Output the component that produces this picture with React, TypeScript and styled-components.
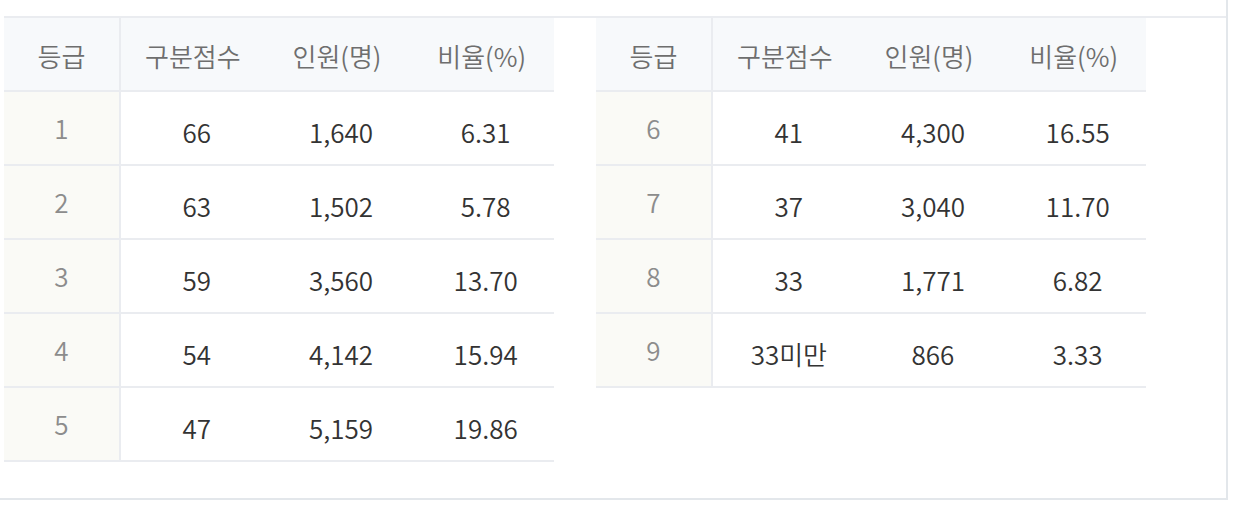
import React from "react";
import styled, { createGlobalStyle } from "styled-components";

const Global = createGlobalStyle`
  html, body { margin: 0; padding: 0; background: #fff; }
  body { font-family: "Noto Sans CJK KR", "Noto Sans", sans-serif; }
`;

const Frame = styled.div`
  box-sizing: border-box;
  width: 1228px;
  height: 500px;
  border-right: 2px solid #e3e7eb;
  border-bottom: 2px solid #e3e7eb;
  padding: 16px 0 0 4px;
`;

const Section = styled.div`
  border-top: 2px solid #eaecf0;
  display: flex;
  gap: 42px;
  align-items: flex-start;
`;

const Table = styled.table`
  width: 550px;
  border-collapse: collapse;
  table-layout: fixed;
  font-size: 26px;
  font-weight: 350;
`;

const HeadCell = styled.th<{ $first?: boolean }>`
  box-sizing: content-box;
  height: 70px;
  padding: 2px 0 0 0;
  background: #f7f9fb;
  color: #6e6e6e;
  font-size: 26px;
  font-weight: 350;
  text-align: center;
  border-bottom: 2px solid #eaecf0;
  border-right: ${(p) => (p.$first ? "2px solid #eaecf0" : "none")};
  width: ${(p) => (p.$first ? "115px" : "auto")};
`;

const GradeCell = styled.td`
  box-sizing: content-box;
  height: 70px;
  padding: 0 0 2px 0;
  background: #fafaf6;
  color: #8c8c8c;
  text-align: center;
  border-bottom: 2px solid #eaecf0;
  border-right: 2px solid #eaecf0;
`;

const Cell = styled.td`
  box-sizing: content-box;
  height: 66px;
  padding: 6px 0 0 8px;
  color: #333;
  text-align: center;
  border-bottom: 2px solid #eaecf0;
`;

type Row = [string, string, string, string];

const left: Row[] = [
  ["1", "66", "1,640", "6.31"],
  ["2", "63", "1,502", "5.78"],
  ["3", "59", "3,560", "13.70"],
  ["4", "54", "4,142", "15.94"],
  ["5", "47", "5,159", "19.86"],
];

const right: Row[] = [
  ["6", "41", "4,300", "16.55"],
  ["7", "37", "3,040", "11.70"],
  ["8", "33", "1,771", "6.82"],
  ["9", "33미만", "866", "3.33"],
];

const GradeTable = ({ rows }: { rows: Row[] }) => (
  <Table>
    <thead>
      <tr>
        <HeadCell $first>등급</HeadCell>
        <HeadCell>구분점수</HeadCell>
        <HeadCell>인원(명)</HeadCell>
        <HeadCell>비율(%)</HeadCell>
      </tr>
    </thead>
    <tbody>
      {rows.map((r) => (
        <tr key={r[0]}>
          <GradeCell>{r[0]}</GradeCell>
          <Cell>{r[1]}</Cell>
          <Cell>{r[2]}</Cell>
          <Cell>{r[3]}</Cell>
        </tr>
      ))}
    </tbody>
  </Table>
);

export default function App() {
  return (
    <>
      <Global />
      <Frame>
        <Section>
          <GradeTable rows={left} />
          <GradeTable rows={right} />
        </Section>
      </Frame>
    </>
  );
}
